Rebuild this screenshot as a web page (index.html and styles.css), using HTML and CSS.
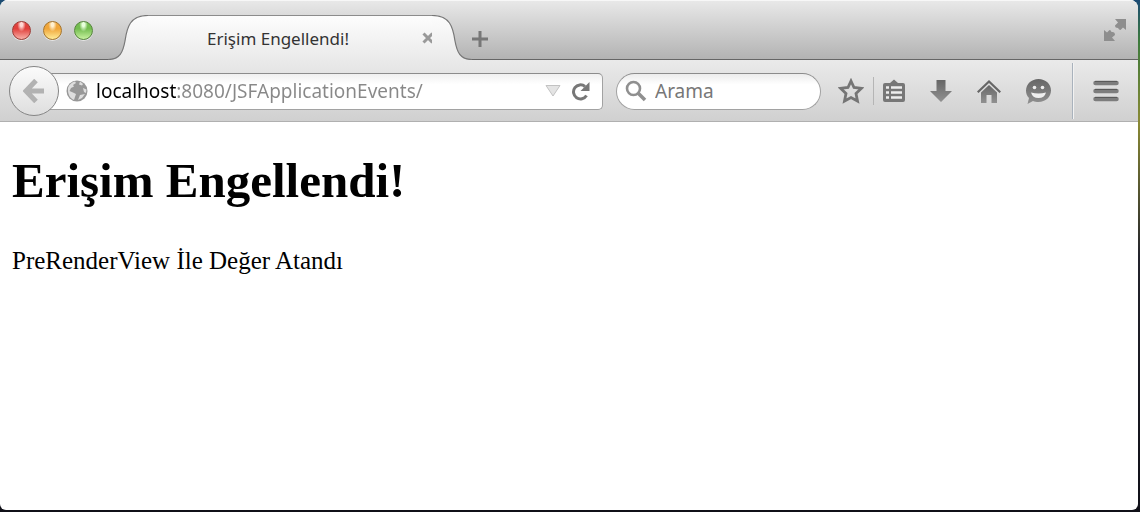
FILE: index.html
```html
<!DOCTYPE html>
<html lang="tr">
<head>
  <title>Erişim Engellendi!</title>
  <meta charset="utf-8">
  <meta name="viewport" content="width=device-width, initial-scale=1">
  <link rel="stylesheet" href="styles.css">
</head>
<body>
<div class="window">
  <header class="titlebar">
    <div class="lights">
      <button class="light red" aria-label="Kapat"></button>
      <button class="light yellow" aria-label="Küçült"></button>
      <button class="light green" aria-label="Büyüt"></button>
    </div>
    <div class="tab">
      <svg class="tab-side" viewBox="0 0 40 45">
        <path d="M0 45V44.500C12 44.500 15 37 17 26C19 12 22 .5 40 .5V45Z" fill="url(#tabFill)"/>
        <path d="M0 44.500C12 44.500 15 37 17 26C19 12 22 .5 40 .5" fill="none" stroke="#777" stroke-width="1.200"/>
        <defs>
          <linearGradient id="tabFill" x1="0" y1="0" x2="0" y2="45" gradientUnits="userSpaceOnUse">
            <stop offset="0" stop-color="#fdfdfd"/>
            <stop offset="1" stop-color="#eaeaea"/>
          </linearGradient>
        </defs>
      </svg>
      <div class="tab-body">
        <span class="tab-title">Erişim Engellendi!</span>
        <button class="tab-close" aria-label="Sekmeyi kapat">
          <svg width="12" height="12" viewBox="0 0 12 12"><path d="M1.500 1.500l9 9M10.500 1.500l-9 9" stroke="#999" stroke-width="3"/></svg>
        </button>
      </div>
      <svg class="tab-side" viewBox="0 0 40 45">
        <path d="M40 45V44.500C28 44.500 25 37 23 26C21 12 18 .5 0 .5V45Z" fill="url(#tabFill)"/>
        <path d="M40 44.500C28 44.500 25 37 23 26C21 12 18 .5 0 .5" fill="none" stroke="#777" stroke-width="1.200"/>
      </svg>
    </div>
    <button class="new-tab" aria-label="Yeni sekme">
      <svg width="16" height="16" viewBox="0 0 16 16"><path d="M8 0v16M0 8h16" stroke="#777" stroke-width="3"/></svg>
    </button>
    <button class="fullscreen" aria-label="Tam ekran">
      <svg width="24" height="24" viewBox="0 0 24 24" fill="#8e8e8e">
        <path d="M12 1H23V12L20 9.500L17.500 12Q16 12 15 10Q12 10 12 7.500L15 4.500Z"/>
        <path d="M1 12L4 14.500L6.500 12Q8 12 8.500 14Q12 13.500 12 17L9 19.500L12 23H1Z"/>
      </svg>
    </button>
  </header>

  <nav class="toolbar">
    <button class="back" aria-label="Geri">
      <svg width="22" height="24" viewBox="0 0 22 24"><path d="M13 1.500L3 12l10 10.500M4 12h17" fill="none" stroke="#b2b2b2" stroke-width="5"/></svg>
    </button>
    <div class="urlbar">
      <svg width="22" height="22" viewBox="0 0 22 22">
        <circle cx="11" cy="11" r="10.500" fill="#989898"/>
        <path d="M2 8C3 4.500 6 2 9 1.500L10 3L7 5L8 6.500L5 8L3.500 11L7 12.500L10 14L9 17L8 20C4 18.500 1.500 14 2 8ZM14 1.500L17 4L16 5.500L13 4.500ZM17 8L20.500 9.500L20 13L18 12ZM14 15L19 14L16 18L12 20Z" fill="#dedede"/>
      </svg>
      <input class="url" type="text" value="localhost:8080/JSFApplicationEvents/" aria-label="Adres">
      <button class="history" aria-label="Geçmiş">
        <svg width="16" height="12" viewBox="0 0 16 12"><path d="M1 .5H15L8 11Z" fill="#e4e4e4" stroke="#c2c2c2"/></svg>
      </button>
      <button class="reload" aria-label="Yenile">
        <svg width="18" height="19" viewBox="0 0 18 19"><path d="M14.500 13.500A7 7 0 1 1 13 4.500" fill="none" stroke="#777" stroke-width="3"/><path d="M17.500 0V9H8.500Z" fill="#777"/></svg>
      </button>
    </div>
    <div class="searchbar">
      <svg width="22" height="22" viewBox="0 0 22 22"><circle cx="8.500" cy="8.500" r="6.500" fill="none" stroke="#8f8f8f" stroke-width="2.600"/><path d="M13 13l7 7" stroke="#8f8f8f" stroke-width="3.500"/></svg>
      <input type="text" placeholder="Arama" aria-label="Arama">
    </div>
    <div class="icons">
      <button class="star" aria-label="Yer imi ekle">
        <svg width="26" height="26" viewBox="0 0 26 26"><path d="M13 3L16 9.500L23.500 10.300L18 15.500L19.500 23L13 19.500L6.500 23L8 15.500L2.500 10.300L10 9.500Z" fill="none" stroke="#757575" stroke-width="2.800"/></svg>
      </button>
      <button class="list" aria-label="Yer imleri">
        <svg width="22" height="24" viewBox="0 0 22 24">
          <path d="M2 4H7L11 .5L15 4H20Q22 4 22 6V21Q22 23 20 23H2Q0 23 0 21V6Q0 4 2 4Z" fill="#777"/>
          <path d="M3 8.500H6M3 13.500H6M3 18.500H6M8 8.500H19M8 13.500H19M8 18.500H19" stroke="#eee" stroke-width="2.600"/>
        </svg>
      </button>
      <button aria-label="İndirilenler">
        <svg width="22" height="22" viewBox="0 0 22 22"><path d="M6.500 0H15.500V11H22L11 22L0 11H6.500Z" fill="url(#glyph)"/></svg>
      </button>
      <button aria-label="Ana sayfa">
        <svg width="24" height="23" viewBox="0 0 24 23">
          <path d="M0 11.500L12 0L24 11.500L22.500 13L12 3L1.500 13Z" fill="#666"/>
          <path d="M4 12.500L12 5L20 12.500V23H14.500V15H9.500V23H4Z" fill="url(#glyph)"/>
        </svg>
      </button>
      <button aria-label="Sohbet">
        <svg width="25" height="25" viewBox="0 0 25 25">
          <path d="M12.500 0C19.500 0 25 5 25 11.500S19.500 23 12.500 23C10.500 23 8.500 22.600 7 22L1.500 25L3 19C1 17 0 14.500 0 11.500C0 5 5.500 0 12.500 0Z" fill="url(#glyph)"/>
          <circle cx="8.500" cy="8.500" r="1.800" fill="#eee"/>
          <circle cx="16.500" cy="8.500" r="1.800" fill="#eee"/>
          <path d="M5 13.500Q12.500 15.500 20 13.500Q18.500 19 12.500 19T5 13.500Z" fill="#eee"/>
        </svg>
      </button>
    </div>
    <button class="menu" aria-label="Menü">
      <svg width="26" height="22" viewBox="0 0 26 22">
        <path d="M2.500 3H23.500M2.500 11H23.500M2.500 19H23.500" stroke="#7d7d7d" stroke-width="4.500" stroke-linecap="round"/>
        <path d="M2 1.500H24M2 9.500H24M2 17.500H24" stroke="#5a5a5a"/>
      </svg>
    </button>
    <svg width="0" height="0">
      <defs>
        <linearGradient id="glyph" x1="0" y1="0" x2="0" y2="1">
          <stop offset="0" stop-color="#666"/>
          <stop offset="1" stop-color="#919191"/>
        </linearGradient>
      </defs>
    </svg>
  </nav>

  <main class="page">
    <h1>Erişim Engellendi!</h1>
    <p>PreRenderView İle Değer Atandı</p>
  </main>
</div>
</body>
</html>
```

FILE: styles.css
```css
* {
  box-sizing: border-box;
}
body {
  margin: 0;
  padding: 0 2px 2px 0;
  min-height: 100vh;
  display: flex;
  /* desktop showing round the window */
  background: linear-gradient(#1b4a74, #3c7a3c 8%, #8a8a35 24%, #23232c 50%, #101018);
  font-family: "Noto Sans", "Open Sans", sans-serif;
}
button {
  display: flex;
  align-items: center;
  justify-content: center;
  padding: 0;
  border: 0;
  background: none;
}
svg {
  display: block;
  flex: none;
}
input {
  min-width: 0;
  padding: 0;
  border: 0;
  outline: 0;
  background: none;
  font-family: inherit;
  font-size: 19px;
}
.window {
  flex: 1;
  min-width: 0;
  display: flex;
  flex-direction: column;
  overflow: hidden;
  border-radius: 8px 8px 6px 6px;
  background: #fff;
}

/* title bar */
.titlebar {
  display: flex;
  align-items: flex-end;
  height: 60px;
  background: linear-gradient(#e9e9e9, #b2b2b2);
  box-shadow: inset 0 1px #f7f7f7, inset 0 -1px #666;
}
.lights {
  display: flex;
  align-self: center;
  gap: 12px;
  width: 108px;
  padding-left: 12px;
}
.light {
  width: 19px;
  height: 19px;
  border-radius: 50%;
  border: 1px solid;
  box-shadow: 0 1px #e6e6e6;
}
.red {
  border-color: #9c3a34;
  background: radial-gradient(ellipse at 50% 15%, #ffd8d4 0 10%, transparent 35%), linear-gradient(#e0403c 40%, #f9b0a8);
}
.yellow {
  border-color: #a5742c;
  background: radial-gradient(ellipse at 50% 15%, #fff0d0 0 10%, transparent 35%), linear-gradient(#f0a63a 40%, #ffec98);
}
.green {
  border-color: #55853c;
  background: radial-gradient(ellipse at 50% 15%, #e8ffdc 0 10%, transparent 35%), linear-gradient(#74bd50 40%, #c8f2a0);
}
.tab {
  display: flex;
  width: 364px;
}
.tab-side {
  width: 40px;
  height: 45px;
}
.tab-body {
  flex: 1;
  display: flex;
  align-items: center;
  border-top: 1px solid #8c8c8c;
  background: linear-gradient(#fdfdfd, #eaeaea);
}
.tab-title {
  flex: 1;
  padding-right: 10px;
  text-align: center;
  font-size: 17px;
  color: #333;
}
.tab-close {
  width: 20px;
  margin-right: -6px;
}
.new-tab {
  width: 16px;
  height: 42px;
}
.fullscreen {
  align-self: center;
  margin-left: auto;
  padding-right: 11px;
}

/* navigation */
.toolbar {
  display: flex;
  align-items: center;
  height: 62px;
  padding: 1px 0 0 9px;
  border-bottom: 1px solid #b0b0b0;
  background: linear-gradient(#eaeaea, #d0d0d0);
}
.back {
  z-index: 1;
  width: 50px;
  height: 50px;
  border: 1px solid #858585;
  border-radius: 50%;
  background: linear-gradient(#fbfbfb, #dedede);
}
.urlbar {
  flex: 1;
  min-width: 0;
  display: flex;
  align-items: center;
  height: 37px;
  margin-left: -10px;
  padding: 0 12px 0 16px;
  border: 1px solid #a2a2a2;
  border-top-color: #8c8c8c;
  border-radius: 0 5px 5px 0;
  background: linear-gradient(#f0f0f0, #fff 30%);
}
.url {
  flex: 1;
  height: 32px;
  margin-left: 8px;
  /* host part dark, the rest grey */
  background: linear-gradient(90deg, #000 81px, #888 81px);
  -webkit-background-clip: text;
          background-clip: text;
  color: transparent;
}
.history {
  width: 20px;
  margin-right: 9px;
}
.searchbar {
  display: flex;
  align-items: center;
  gap: 8px;
  width: 205px;
  height: 37px;
  margin-left: 13px;
  padding: 0 16px 0 8px;
  border: 1px solid #a2a2a2;
  border-top-color: #8c8c8c;
  border-radius: 19px;
  background: linear-gradient(#ececec, #fff 30%);
}
.searchbar input {
  flex: 1;
}
.searchbar input::placeholder {
  color: #777;
}
.icons {
  display: flex;
  align-items: center;
  gap: 25px;
  padding: 0 21px 0 17px;
}
.star {
  margin-right: -16px;
}
.list {
  padding-left: 9px;
  border-left: 1px solid #b5b5b5;
  height: 28px;
}
.menu {
  width: 66px;
  height: 56px;
  border-left: 1px solid #a9b2bc;
  box-shadow: inset 1px 0 #f2f2f2;
}

/* document */
.page {
  flex: 1;
  padding: 0 12px;
  font-family: "Liberation Serif", serif;
  font-size: 25px;
  line-height: 28px;
  color: #000;
}
.page h1 {
  margin: 31px 0 38px;
  font-size: 49px;
  line-height: 56px;
}
.page p {
  margin: 0;
}
```
